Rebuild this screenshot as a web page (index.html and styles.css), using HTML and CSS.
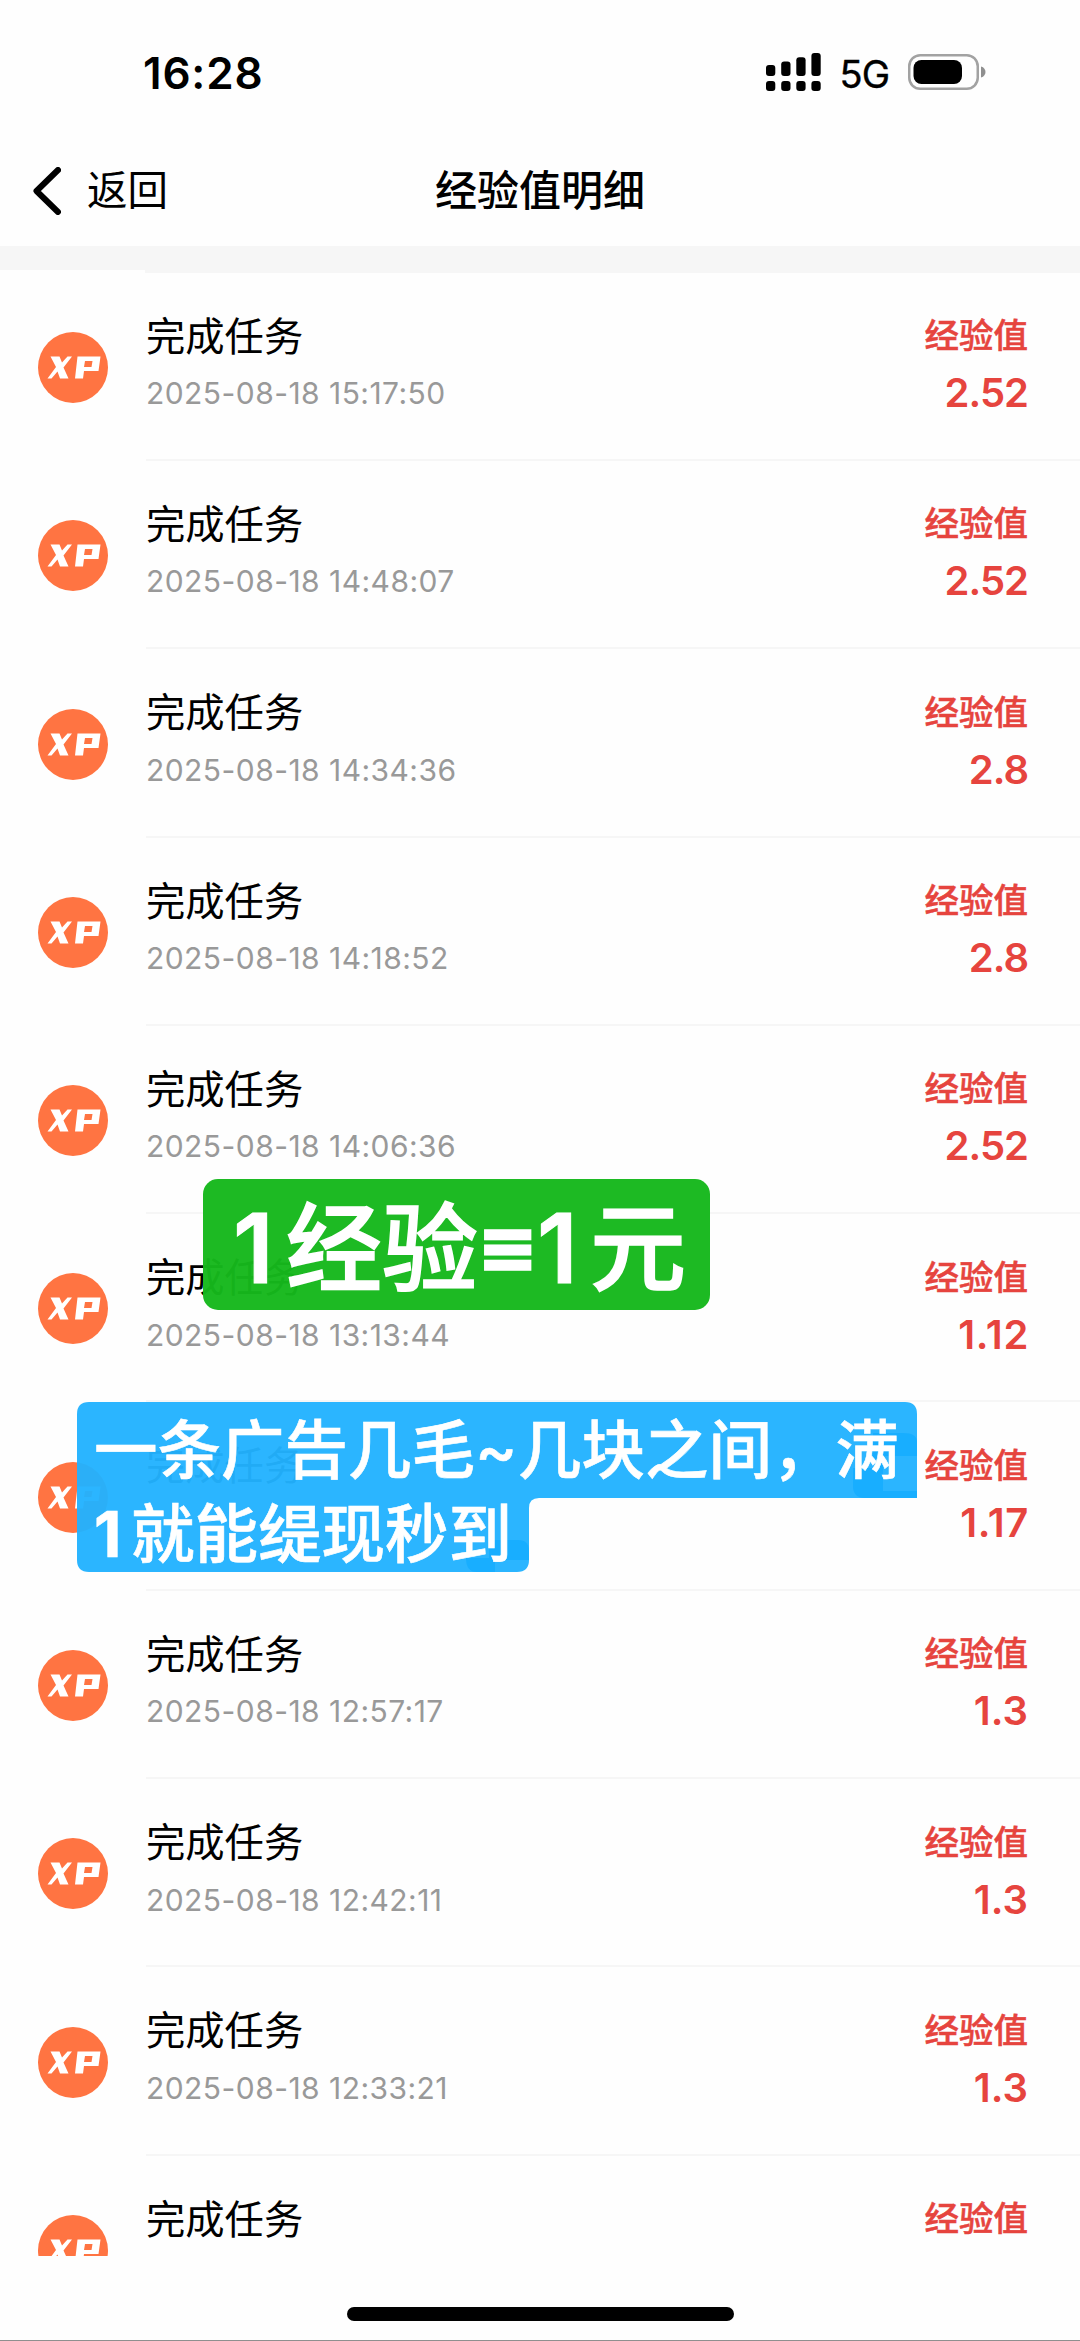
FILE: index.html
```html
<!DOCTYPE html>
<html lang="zh-CN">
<head>
<meta charset="utf-8">
<title>经验值明细</title>
<link rel="stylesheet" href="styles.css">
</head>
<body>
<svg width="0" height="0" class="defs"><defs>
<symbol id="xp" viewBox="0 0 70 71">
<ellipse cx="35" cy="35.500" rx="35" ry="35.500" fill="#ff7442"/>
<path d="M12.500 24.500h9l2.500 6 5.500-6h4.500L25.500 35.500l5 11H22l-2.500-7-6 7H9.500l8.500-11.500z" fill="#fff"/>
<path d="M39.500 24.500h23l-2 14.500H46l-1 7.500h-8zM47 29l-1 6h7.500l1-6z" fill="#fff" fill-rule="evenodd"/>
</symbol></defs></svg>
<div class="phone">
<header class="status">
<span class="time">16:28</span>
<div class="status-right">
<svg class="signal" viewBox="0 0 56 38" width="56" height="38"><rect x="0" y="12" width="9.300" height="11" rx="3"/><rect x="15.200" y="8.600" width="9.300" height="14.400" rx="3"/><rect x="30.300" y="4.300" width="9.300" height="18.700" rx="3"/><rect x="45.400" y="0" width="9.300" height="23" rx="3"/><rect x="0" y="28" width="9.300" height="10" rx="3"/><rect x="15.200" y="28" width="9.300" height="10" rx="3"/><rect x="30.300" y="28" width="9.300" height="10" rx="3"/><rect x="45.400" y="28" width="9.300" height="10" rx="3"/></svg>
<span class="net">5G</span>
<svg class="battery" viewBox="0 0 78 36" width="78" height="36"><rect x="1.250" y="1.250" width="68.500" height="33.500" rx="11" fill="none" stroke="#a2a2a2" stroke-width="2.500"/><rect x="5.500" y="6" width="48.500" height="24" rx="8"/><path d="M73 12.500c6 1.500 6 9.500 0 11z" fill="#8f8f8f"/></svg>
</div>
</header>
<nav class="nav">
<div class="back"><svg viewBox="0 0 28 48" width="28" height="48"><path d="M25 3 3.500 24 25 45" fill="none" stroke="#000" stroke-width="6" stroke-linecap="round" stroke-linejoin="round"/></svg><span>返回</span></div>
<h1>经验值明细</h1>
</nav>
<div class="band"></div>
<main class="list">
<div class="top-line"></div>
<div class="row"><svg class="xp"><use href="#xp"/></svg><div class="body"><div class="info"><b>完成任务</b><time>2025-08-18 15:17:50</time></div><div class="amount"><b>经验值</b><span class="tight">2.52</span></div></div></div>
<div class="row"><svg class="xp"><use href="#xp"/></svg><div class="body"><div class="info"><b>完成任务</b><time>2025-08-18 14:48:07</time></div><div class="amount"><b>经验值</b><span class="tight">2.52</span></div></div></div>
<div class="row"><svg class="xp"><use href="#xp"/></svg><div class="body"><div class="info"><b>完成任务</b><time>2025-08-18 14:34:36</time></div><div class="amount"><b>经验值</b><span class="tight">2.8</span></div></div></div>
<div class="row"><svg class="xp"><use href="#xp"/></svg><div class="body"><div class="info"><b>完成任务</b><time>2025-08-18 14:18:52</time></div><div class="amount"><b>经验值</b><span class="tight">2.8</span></div></div></div>
<div class="row"><svg class="xp"><use href="#xp"/></svg><div class="body"><div class="info"><b>完成任务</b><time>2025-08-18 14:06:36</time></div><div class="amount"><b>经验值</b><span class="tight">2.52</span></div></div></div>
<div class="row"><svg class="xp"><use href="#xp"/></svg><div class="body"><div class="info"><b>完成任务</b><time>2025-08-18 13:13:44</time></div><div class="amount"><b>经验值</b><span class="loose">1.12</span></div></div></div>
<div class="row"><svg class="xp"><use href="#xp"/></svg><div class="body"><div class="info"><b>完成任务</b></div><div class="amount"><b>经验值</b><span class="loose">1.17</span></div></div></div>
<div class="row"><svg class="xp"><use href="#xp"/></svg><div class="body"><div class="info"><b>完成任务</b><time>2025-08-18 12:57:17</time></div><div class="amount"><b>经验值</b><span>1.3</span></div></div></div>
<div class="row"><svg class="xp"><use href="#xp"/></svg><div class="body"><div class="info"><b>完成任务</b><time>2025-08-18 12:42:11</time></div><div class="amount"><b>经验值</b><span>1.3</span></div></div></div>
<div class="row"><svg class="xp"><use href="#xp"/></svg><div class="body"><div class="info"><b>完成任务</b><time>2025-08-18 12:33:21</time></div><div class="amount"><b>经验值</b><span>1.3</span></div></div></div>
<div class="row"><svg class="xp"><use href="#xp"/></svg><div class="body"><div class="info"><b>完成任务</b></div><div class="amount"><b>经验值</b></div></div></div>
</main>
<footer class="home"><i></i></footer>
<div class="sticker green"><span class="one">1</span><span class="word">经验</span><span class="equiv">≡</span><span class="one second">1</span><span class="word">元</span></div>
<div class="sticker blue">
<svg class="shape" viewBox="0 0 840 170" width="840" height="170"><path d="M12 0H828Q840 0 840 12V96H462Q452 96 452 106V158Q452 170 440 170H12Q0 170 0 158V12Q0 0 12 0Z" fill="#22b2ff" fill-opacity=".96"/><path d="M796 31H826Q840 31 840 40V54H806V89H840V96H788Q776 96 776 84V66H796Z" fill="#0aa7ff" fill-opacity=".55"/><path d="M412 138H441Q452 138 452 149V158H418V170H400Q389 170 389 156H412Z" fill="#0aa7ff" fill-opacity=".55"/></svg>
<p>一条广告几毛<span class="tilde">~</span>几块之间，满</p>
<p><span class="one">1</span>就能缇现秒到</p>
</div>
</div>
</body>
</html>
```
FILE: styles.css
```css
* { box-sizing: border-box; }
body { margin: 0; background: #fefefe; color: #000; font-family: Inter, "Noto Sans CJK SC", sans-serif; }
.defs { position: absolute; }
.phone { position: relative; width: 1080px; height: 2341px; display: flex; flex-direction: column; overflow: hidden; border-bottom: 1px solid #8f8f8f; }
.status { height: 136px; display: flex; justify-content: space-between; padding: 0 94px 0 143px; }
.time { font-size: 44px; font-weight: 600; line-height: 54px; padding-top: 46px; letter-spacing: .8px; }
.status-right { display: flex; align-items: flex-start; }
.signal { margin-top: 53px; }
.net { font-size: 38px; line-height: 46px; margin: 51px 19px 0 18px; letter-spacing: -1px; -webkit-text-stroke: .4px #000; }
.battery { margin-top: 54px; }
.nav { height: 110px; display: grid; grid-template-columns: 1fr auto 1fr; align-items: center; }
.back { display: flex; align-items: center; gap: 26px; padding-left: 33px; font-size: 40.500px; line-height: 60px; }
.nav h1 { margin: 0; font-size: 42px; line-height: 60px; font-weight: 500; }
.band { height: 24px; background: #f6f6f6; flex: none; }
.list { height: 1985.500px; flex: none; overflow: hidden; }
.top-line { height: 2.700px; margin-left: 145px; background: #f6f6f6; }
.row { height: 188.300px; display: flex; }
.xp { width: 70px; height: 71px; margin: 59.300px 38.500px 0 37.500px; flex: none; }
.body { flex: 1; display: flex; justify-content: space-between; padding: 0 52px 0 0; border-bottom: 2px solid #f6f6f6; }
.info, .amount { display: flex; flex-direction: column; }
.info b { font-size: 39.300px; line-height: 58px; font-weight: 400; margin-top: 35px; }
.info time { font-size: 30px; line-height: 36px; color: #999; margin-top: 9.500px; letter-spacing: .45px; }
.amount { align-items: flex-end; color: #e6443e; }
.amount b { font-size: 34.500px; line-height: 50px; font-weight: 500; margin-top: 38.500px; -webkit-text-stroke: .5px #e6443e; }
.amount span { font-size: 40px; line-height: 48px; font-weight: 600; margin-top: 8px; }
.amount .tight { letter-spacing: -1px; }
.amount .loose { letter-spacing: .7px; margin-right: -1px; }
.home { flex: 1; display: flex; justify-content: center; padding-top: 51px; }
.home i { width: 387px; height: 14px; border-radius: 7px; background: #000; }
.sticker { position: absolute; color: #fff; white-space: nowrap; }
.green { left: 203px; top: 1179px; width: 507px; height: 131px; border-radius: 15px; background: rgba(22,184,28,.97); display: flex; align-items: center; padding: 8px 0 0 30px; font-size: 96px; font-weight: 500; line-height: 131px; }
.green span { flex: none; }
.green .word { -webkit-text-stroke: 1.500px #fff; }
.green .one { width: 53px; font-weight: 600; -webkit-text-stroke: 1px #fff; }
.green .equiv { width: 59px; padding-left: 4px; font-family: "Liberation Sans", sans-serif; font-size: 88px; font-weight: 700; -webkit-text-stroke: 4.500px #fff; }
.green .second { width: 53px; }
.blue { left: 77px; top: 1402px; width: 840px; height: 170px; padding: 5.500px 0 0 17px; font-size: 63.500px; font-weight: 500; }
.shape { position: absolute; left: 0; top: 0; }
.blue p { position: relative; margin: 0; height: 84px; line-height: 84px; display: flex; -webkit-text-stroke: .6px #fff; }
.blue span { flex: none; }
.blue .tilde { width: 43px; }
.blue .one { width: 37px; font-weight: 700; }
```
